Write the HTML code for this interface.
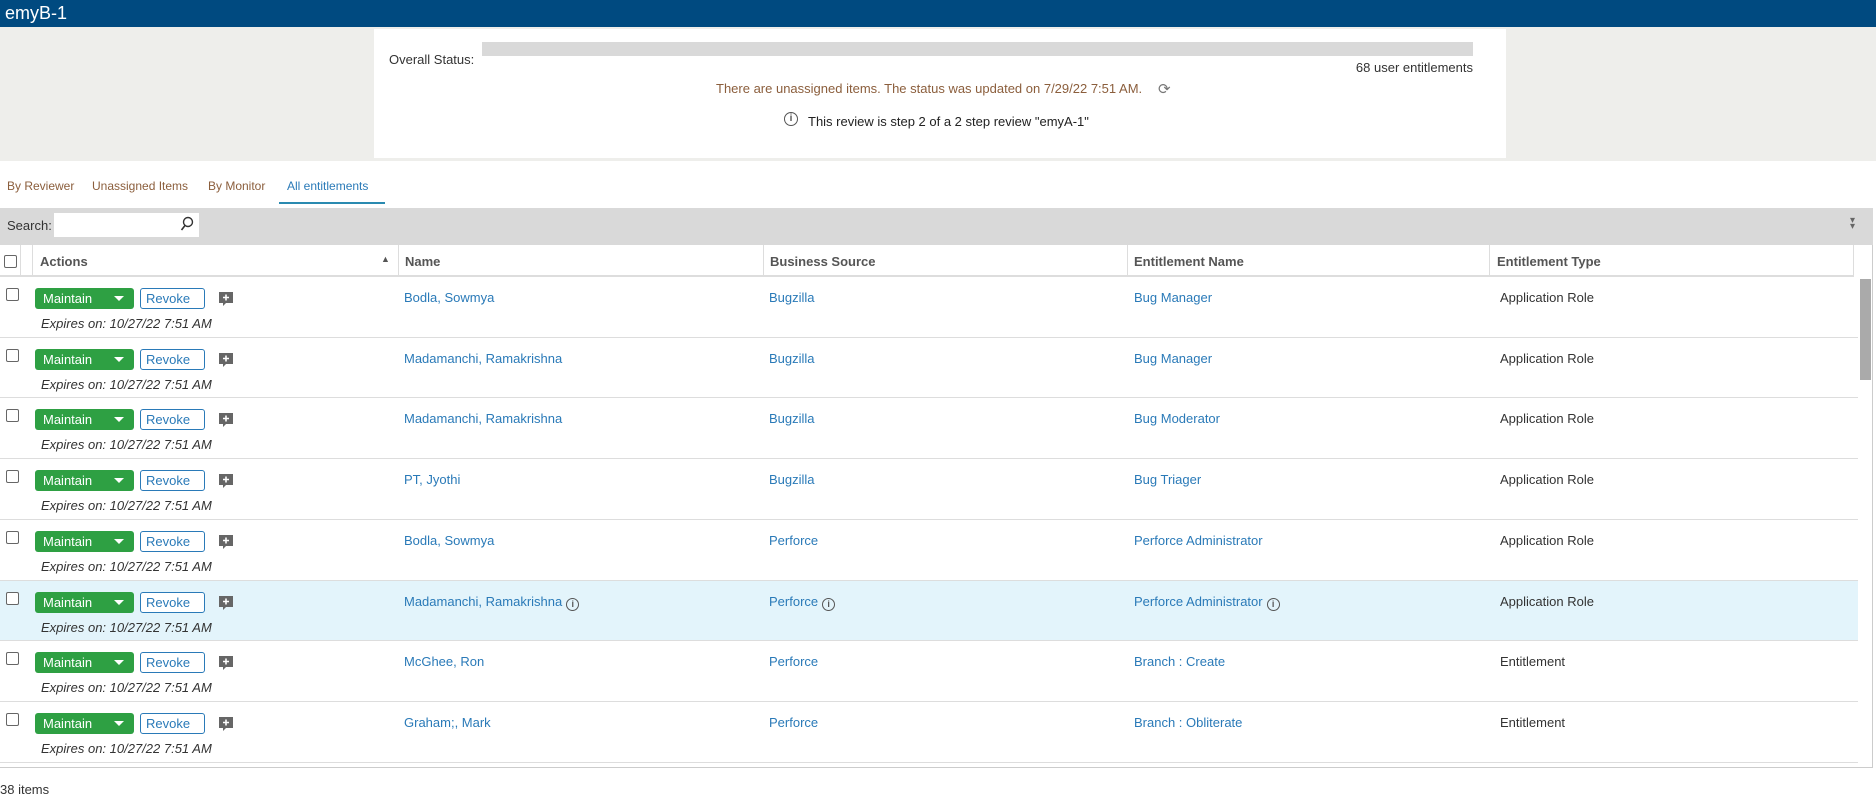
<!DOCTYPE html>
<html><head><meta charset="utf-8"><style>
*{box-sizing:border-box;margin:0;padding:0}
body{width:1876px;height:797px;overflow:hidden;background:#fff;font-family:"Liberation Sans",sans-serif;font-size:13px;color:#333;position:relative}
.abs{position:absolute;white-space:nowrap}
.top{left:0;top:0;width:1876px;height:27px;background:#004a80;color:#fff;font-size:18px;padding:3px 0 0 5px}
.gray{left:0;top:27px;width:1876px;height:134px;background:#eeeeeb}
.panel{left:374px;top:29px;width:1132px;height:129px;background:#fff}
.link{color:#2a7ab8}
.hdr{font-weight:bold;color:#555;font-size:13px;font-family:"Liberation Sans Narrow","Liberation Sans",sans-serif}
.btnm{width:99px;height:21px;background:#2ea043;border-radius:3px;color:#fff;font-size:13px;padding:3px 0 0 8px}
.btnm:after{content:"";position:absolute;right:10px;top:8px;border-left:5px solid transparent;border-right:5px solid transparent;border-top:5px solid #fff}
.btnr{width:65px;height:21px;border:1px solid #2a7ab8;border-radius:3px;color:#2a7ab8;font-size:13px;padding:2px 0 0 5px;background:#fff}
.cb{width:13px;height:13px;border:1px solid #666;border-radius:2px;background:#fff}
.exp{font-style:italic;font-size:13px;color:#333}
.vl{position:absolute;width:1px;background:#ddd}
</style></head><body>
<div class="abs top">emyB-1</div>
<div class="abs gray"></div>
<div class="abs panel"></div>
<div class="abs" style="left:389px;top:52px">Overall Status:</div>
<div class="abs" style="left:482px;top:42px;width:991px;height:14px;background:#d9d9d9"></div>
<div class="abs" style="left:1350px;top:60px;width:123px;text-align:right">68 user entitlements</div>
<div class="abs" style="left:716px;top:81px;color:#8b5e3c">There are unassigned items. The status was updated on 7/29/22 7:51 AM.</div>
<div class="abs" style="left:1158px;top:80px;color:#777;font-size:15px">⟳</div>
<div class="abs" style="left:784px;top:112px;width:14px;height:14px;border:1.3px solid #555;border-radius:50%;font-size:10px;text-align:center;line-height:11px;font-weight:bold;color:#555">i</div>
<div class="abs" style="left:808px;top:114px;color:#222">This review is step 2 of a 2 step review "emyA-1"</div>

<div class="abs" style="left:7px;top:179px;color:#8b5e3c;font-size:12px">By Reviewer</div>
<div class="abs" style="left:92px;top:179px;color:#8b5e3c;font-size:12px">Unassigned Items</div>
<div class="abs" style="left:208px;top:179px;color:#8b5e3c;font-size:12px">By Monitor</div>
<div class="abs" style="left:287px;top:179px;color:#2a7ab8;font-size:12px">All entitlements</div>
<div class="abs" style="left:279px;top:202px;width:106px;height:2px;background:#2a8ab0"></div>

<div class="abs" style="left:0;top:208px;width:1873px;height:37px;background:#d9d9d9"></div>
<div class="abs" style="left:7px;top:218px;font-size:13px">Search:</div>
<div class="abs" style="left:54px;top:213px;width:145px;height:24px;background:#fff"></div>
<svg class="abs" style="left:180px;top:216px" width="14" height="16"><circle cx="8" cy="6" r="4.5" fill="none" stroke="#333" stroke-width="1.4"/><line x1="5" y1="9.5" x2="1.5" y2="14" stroke="#333" stroke-width="1.6"/></svg>
<div class="abs" style="left:1850px;top:218px;color:#666;font-size:10px;line-height:6px">▾<br>▾</div>

<div class="abs" style="left:0;top:245px;width:1853px;height:32px;background:#fff;border-bottom:2px solid #ddd"></div>
<div class="abs cb" style="left:4px;top:255px"></div>
<div class="vl" style="left:20px;top:245px;height:32px"></div>
<div class="vl" style="left:32px;top:245px;height:32px"></div>
<div class="vl" style="left:398px;top:245px;height:32px"></div>
<div class="vl" style="left:763px;top:245px;height:32px"></div>
<div class="vl" style="left:1127px;top:245px;height:32px"></div>
<div class="vl" style="left:1489px;top:245px;height:32px"></div>
<div class="vl" style="left:1853px;top:245px;height:32px"></div>
<div class="abs hdr" style="left:40px;top:254px">Actions</div>
<div class="abs" style="left:381px;top:254px;font-size:9px;color:#555">▲</div>
<div class="abs hdr" style="left:405px;top:254px">Name</div>
<div class="abs hdr" style="left:770px;top:254px">Business Source</div>
<div class="abs hdr" style="left:1134px;top:254px">Entitlement Name</div>
<div class="abs hdr" style="left:1497px;top:254px">Entitlement Type</div>

<div class="abs" style="left:0;top:767px;width:1873px;height:1px;background:#ccc"></div>
<div class="abs" style="left:1872px;top:245px;width:1px;height:522px;background:#ccc"></div>
<div class="abs" style="left:1860px;top:279px;width:11px;height:101px;background:#aaa"></div>
<div class="abs" style="left:0;top:782px;font-size:13px">38 items</div>

<div id="rows"></div>
<script>
const d=[["Bodla, Sowmya","Bugzilla","Bug Manager","Application Role"],
["Madamanchi, Ramakrishna","Bugzilla","Bug Manager","Application Role"],
["Madamanchi, Ramakrishna","Bugzilla","Bug Moderator","Application Role"],
["PT, Jyothi","Bugzilla","Bug Triager","Application Role"],
["Bodla, Sowmya","Perforce","Perforce Administrator","Application Role"],
["Madamanchi, Ramakrishna","Perforce","Perforce Administrator","Application Role",1],
["McGhee, Ron","Perforce","Branch : Create","Entitlement"],
["Graham;, Mark","Perforce","Branch : Obliterate","Entitlement"]];
const info='<span style="display:inline-block;width:13px;height:13px;border:1.2px solid #555;border-radius:50%;font-size:9px;text-align:center;line-height:10px;font-weight:bold;color:#555;margin-left:4px;vertical-align:-1px">i</span>';
let h='';
d.forEach((r,i)=>{const t=Math.round(277+i*60.7),t2=Math.round(277+(i+1)*60.7);
h+=`<div class="abs" style="left:0;top:${t}px;width:1858px;height:${t2-t}px;background:${r[4]?'#e3f4fb':'#fff'};border-bottom:1px solid #ddd"></div>
<div class="abs cb" style="left:6px;top:${t+11}px"></div>
<div class="abs btnm" style="left:35px;top:${t+11}px">Maintain</div>
<div class="abs btnr" style="left:140px;top:${t+11}px">Revoke</div>
<svg class="abs" style="left:218px;top:${t+14}px" width="16" height="16"><path d="M1 1h14v11H8l-3 3v-3H1z" fill="#666"/><path d="M8 3.5v6M5 6.5h6" stroke="#fff" stroke-width="1.6"/></svg>
<div class="abs exp" style="left:41px;top:${t+39}px">Expires on: 10/27/22 7:51 AM</div>
<div class="abs link" style="left:404px;top:${t+13}px">${r[0]}${r[4]?info:''}</div>
<div class="abs link" style="left:769px;top:${t+13}px">${r[1]}${r[4]?info:''}</div>
<div class="abs link" style="left:1134px;top:${t+13}px">${r[2]}${r[4]?info:''}</div>
<div class="abs" style="left:1500px;top:${t+13}px">${r[3]}</div>`;});
document.getElementById('rows').innerHTML=h;
</script>
</body></html>
